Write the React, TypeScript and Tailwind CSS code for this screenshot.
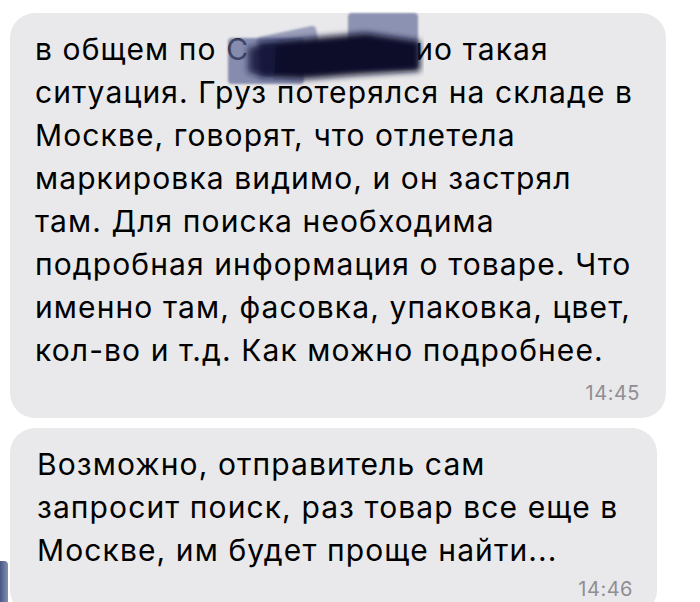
const first = [
  'ситуация. Груз потерялся на складе в',
  'Москве, говорят, что отлетела',
  'маркировка видимо, и он застрял',
  'там. Для поиска необходима',
  'подробная информация о товаре. Что',
  'именно там, фасовка, упаковка, цвет,',
  'кол-во и т.д. Как можно подробнее.',
]

const second = [
  'Возможно, отправитель сам',
  'запросит поиск, раз товар все еще в',
  'Москве, им будет проще найти...',
]

// blurred marker scribble that hides a word
function Scribble() {
  return (
    <svg className="absolute left-[189px] -top-[21px] pointer-events-none" width="200" height="84" viewBox="0 0 200 84">
      <defs>
        <filter id="soft" filterUnits="userSpaceOnUse" x="0" y="0" width="200" height="84">
          <feGaussianBlur stdDeviation="1.2" />
        </filter>
        <filter id="softer" filterUnits="userSpaceOnUse" x="0" y="0" width="200" height="84">
          <feGaussianBlur stdDeviation="3" />
        </filter>
      </defs>
      <g filter="url(#soft)">
        <rect x="4" y="31" width="76" height="46" rx="4" fill="#5b6494" fillOpacity="0.7" />
        <rect x="124" y="6" width="70" height="56" rx="4" fill="#5b6494" fillOpacity="0.65" />
        <rect x="36" y="24" width="60" height="40" rx="4" fill="#5b6494" fillOpacity="0.55" transform="rotate(-12 66 44)" />
      </g>
      <g filter="url(#softer)">
        <path d="M34 36 L97 30 L142 26 L196 34 L196 64 L132 68 L82 72 L34 70 Z" fill="#0b0f2a" />
        <path d="M24 40 L52 38 L50 70 L24 66 Z" fill="#151b40" fillOpacity="0.85" />
      </g>
    </svg>
  )
}

export default function App() {
  return (
    <main
      className="w-[700px] h-[602px] overflow-hidden bg-white text-black pt-[13px]"
      style={{ fontFamily: 'Inter, "Noto Sans", sans-serif' }}
    >
      <div className="flex flex-col gap-[10px]">
        {/* first message */}
        <div className="flex">
          <div className="w-[10px] shrink-0" />
          <div className="w-[656px] rounded-[25px] bg-[#e9e9eb] pl-[25px] pr-[26px] pt-[15px] pb-[13px]">
            <div className="text-[30px] leading-[43px] tracking-[1.1px] whitespace-nowrap">
              <div className="relative">
                в общем по С<span className="inline-block w-[166px]">&nbsp;</span>ио такая
                <Scribble />
              </div>
              {first.map(l => (
                <div key={l}>{l}</div>
              ))}
            </div>
            <div className="text-right text-[20px] leading-[24px] tracking-[0.5px] text-[#8e8e93] mt-[9px]">14:45</div>
          </div>
        </div>

        {/* second message */}
        <div className="flex">
          <div className="w-[10px] shrink-0 flex flex-col justify-end">
            <div className="w-[8px] h-[54px] rounded-tr-[4px] bg-gradient-to-r from-[#4a5785] to-[#8490b4]" />
          </div>
          <div className="w-[647px] rounded-[25px] bg-[#e9e9eb] pl-[27px] pr-[24px] pt-[15px] pb-[14px]">
            <div className="text-[30px] leading-[43px] tracking-[1.1px] whitespace-nowrap">
              {second.map(l => (
                <div key={l}>{l}</div>
              ))}
            </div>
            <div className="text-right text-[20px] leading-[24px] tracking-[0.5px] text-[#8e8e93] mt-[5px]">14:46</div>
          </div>
        </div>
      </div>
    </main>
  )
}
